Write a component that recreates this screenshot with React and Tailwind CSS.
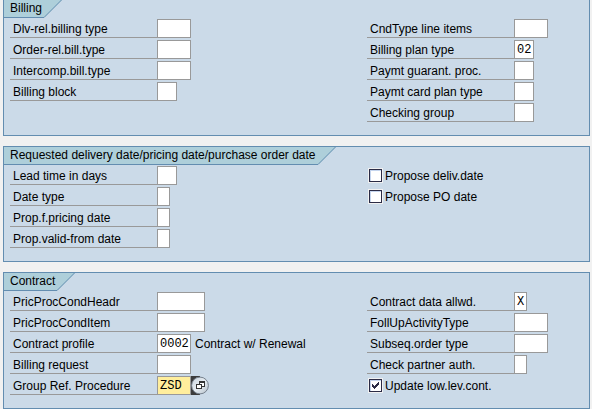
import { useId } from 'react';

const widths = {
  1: 'w-[13px]',
  2: 'w-5',
  4: 'w-[34px]',
  6: 'w-12',
};

function Field({ label, size, value = '', note, active, children }) {
  const id = useId();
  return (
    <div className="flex h-[19px] items-stretch">
      <label htmlFor={id} className="w-[147px] shrink-0 border-b border-[#999999] pl-[3px] leading-5 whitespace-nowrap">
        {label}
      </label>
      <input
        id={id}
        type="text"
        maxLength={size}
        defaultValue={value}
        className={`${widths[size]} ${active ? 'bg-[#ffee9c]' : 'bg-white'} rounded-none border border-[#999999] pl-0.5 font-['Liberation_Mono',monospace] text-xs leading-4 outline-none`}
      />
      {note && <span className="pl-1 leading-5 whitespace-nowrap">{note}</span>}
      {children}
    </div>
  );
}

function Check({ label, checked }) {
  return (
    <label className="flex h-[19px] items-center pl-px">
      <span className="grid bg-[#f1f1f1] p-px">
        <input
          type="checkbox"
          defaultChecked={checked}
          className="peer col-start-1 row-start-1 size-[13px] appearance-none border border-[#2b2b45] bg-white shadow-[inset_1px_1px_0_#c5d5ee]"
        />
        <svg
          viewBox="0 0 13 13"
          className="pointer-events-none invisible col-start-1 row-start-1 size-[13px] peer-checked:visible"
          fill="#2b2b45"
          shapeRendering="crispEdges"
        >
          <path d="M3 5h1v1h1v1h1v-1h1v-1h1v-1h1v-1h1v3h-1v1h-1v1h-1v1h-1v1h-1v-1h-1v-1h-1z" />
        </svg>
      </span>
      <span className="pl-0.5 leading-5 whitespace-nowrap">{label}</span>
    </label>
  );
}

function MatchButton() {
  return (
    <button type="button" aria-label="Possible entries" className="h-[19px] w-[18px]">
      <svg viewBox="0 0 18 19" className="h-[19px] w-[18px]">
        <defs>
          <linearGradient id="ball" x1="0" y1="0" x2="1" y2="1">
            <stop offset="0" stopColor="#c9d3dd" />
            <stop offset="0.5" stopColor="#e6ecf1" />
            <stop offset="1" stopColor="#b4c0cb" />
          </linearGradient>
        </defs>
        <path d="M0 0h9v19H0z" fill="#3c3c3c" />
        <circle cx="9" cy="9.5" r="8.4" fill="url(#ball)" stroke="#76818d" strokeWidth="1" />
        <g shapeRendering="crispEdges">
          <path d="M8 5h6v6H8z" fill="#333333" />
          <path d="M9 7h4v3H9z" fill="#ffffff" />
          <path d="M5 8h6v5H5z" fill="#333333" />
          <path d="M6 9h4v3H6z" fill="#ffffff" />
        </g>
      </svg>
    </button>
  );
}

function Group({ title, open, left, right }) {
  return (
    <section className={`border-[#638db0] bg-[#cbdae8] ${open ? 'border-x border-b' : 'border'}`}>
      <div className="flex h-[18px]">
        <h2 className="border-b border-[#638db0] bg-[#aecfda] pr-0.5 pl-1.5 leading-4 whitespace-nowrap">{title}</h2>
        <svg viewBox="0 0 18 18" className="size-[18px]">
          <path d="M0 0h18L0.5 17.5H0z" fill="#aecfda" />
          <path d="M17.5 0L0 17.5" stroke="#638db0" fill="none" />
        </svg>
      </div>
      <div className="grid grid-cols-[357px_1fr] pt-px pb-[13px] pl-1.5">
        <div className="flex flex-col gap-0.5">{left}</div>
        <div className="flex flex-col gap-0.5">{right}</div>
      </div>
    </section>
  );
}

export default function App() {
  return (
    <main className="flex flex-col gap-2.5 bg-[#f1f1f1] pr-0.5 pl-[3px] font-['Liberation_Sans',Arial,sans-serif] text-xs text-black">
      <Group
        title="Billing"
        open
        left={
          <>
            <Field label="Dlv-rel.billing type" size={4} />
            <Field label="Order-rel.bill.type" size={4} />
            <Field label="Intercomp.bill.type" size={4} />
            <Field label="Billing block" size={2} />
          </>
        }
        right={
          <>
            <Field label="CndType line items" size={4} />
            <Field label="Billing plan type" size={2} value="02" />
            <Field label="Paymt guarant. proc." size={2} />
            <Field label="Paymt card plan type" size={2} />
            <Field label="Checking group" size={2} />
          </>
        }
      />
      <Group
        title="Requested delivery date/pricing date/purchase order date"
        left={
          <>
            <Field label="Lead time in days" size={2} />
            <Field label="Date type" size={1} />
            <Field label="Prop.f.pricing date" size={1} />
            <Field label="Prop.valid-from date" size={1} />
          </>
        }
        right={
          <>
            <Check label="Propose deliv.date" />
            <Check label="Propose PO date" />
          </>
        }
      />
      <Group
        title="Contract"
        left={
          <>
            <Field label="PricProcCondHeadr" size={6} />
            <Field label="PricProcCondItem" size={6} />
            <Field label="Contract profile" size={4} value="0002" note="Contract w/ Renewal" />
            <Field label="Billing request" size={4} />
            <Field label="Group Ref. Procedure" size={4} value="ZSD" active>
              <MatchButton />
            </Field>
          </>
        }
        right={
          <>
            <Field label="Contract data allwd." size={1} value="X" />
            <Field label="FollUpActivityType" size={4} />
            <Field label="Subseq.order type" size={4} />
            <Field label="Check partner auth." size={1} />
            <Check label="Update low.lev.cont." checked />
          </>
        }
      />
    </main>
  );
}
